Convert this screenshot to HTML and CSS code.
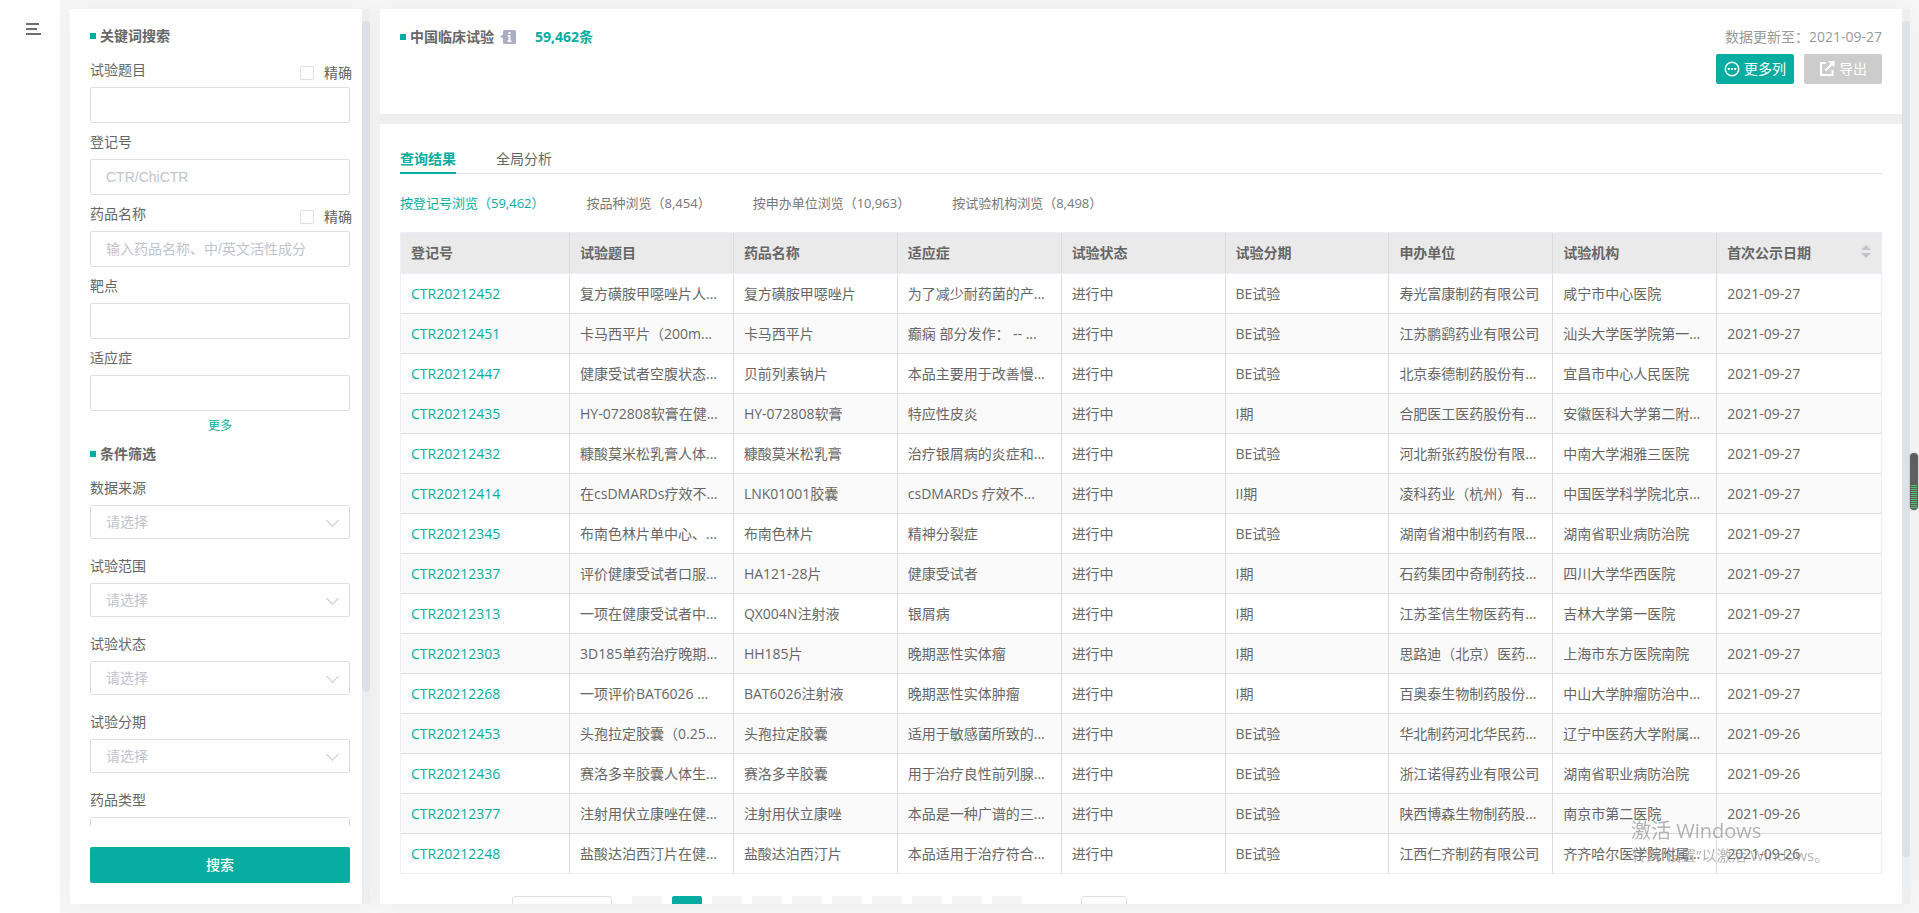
FILE: index.html
```html
<!DOCTYPE html>
<html lang="zh-CN">
<head>
<meta charset="utf-8">
<title>中国临床试验</title>
<link rel="stylesheet" href="styles.css">
</head>
<body>
<nav class="rail">
  <button class="menu-btn" type="button" aria-label="菜单">
    <svg width="16" height="14" viewBox="0 0 16 14" fill="none" stroke="#6e6e6e" stroke-width="2"><path d="M0 2h13M0 7h11M0 12h15"/></svg>
  </button>
</nav>
<aside class="panel side">
  <form class="side-main">
    <div class="side-scroll">
      <h2 class="title">关键词搜索</h2>
      <div class="field">
        <div class="field-head"><label for="f1">试验题目</label><label class="exact"><input type="checkbox" class="check">精确</label></div>
        <input class="text" id="f1" type="text">
      </div>
      <div class="field">
        <div class="field-head"><label for="f2">登记号</label></div>
        <input class="text" id="f2" type="text" placeholder="CTR/ChiCTR">
      </div>
      <div class="field">
        <div class="field-head"><label for="f3">药品名称</label><label class="exact"><input type="checkbox" class="check">精确</label></div>
        <input class="text" id="f3" type="text" placeholder="输入药品名称、中/英文活性成分">
      </div>
      <div class="field">
        <div class="field-head"><label for="f4">靶点</label></div>
        <input class="text" id="f4" type="text">
      </div>
      <div class="field">
        <div class="field-head"><label for="f5">适应症</label></div>
        <input class="text" id="f5" type="text">
      </div>
      <a class="more" href="#">更多</a>
      <h2 class="title">条件筛选</h2>
      <div class="field pick"><div class="field-head"><label for="s1">数据来源</label></div><div class="select-wrap"><select id="s1" class="select"><option>请选择</option></select></div></div>
      <div class="field pick"><div class="field-head"><label for="s2">试验范围</label></div><div class="select-wrap"><select id="s2" class="select"><option>请选择</option></select></div></div>
      <div class="field pick"><div class="field-head"><label for="s3">试验状态</label></div><div class="select-wrap"><select id="s3" class="select"><option>请选择</option></select></div></div>
      <div class="field pick"><div class="field-head"><label for="s4">试验分期</label></div><div class="select-wrap"><select id="s4" class="select"><option>请选择</option></select></div></div>
      <div class="field pick"><div class="field-head"><label for="s5">药品类型</label></div><div class="select-wrap"><select id="s5" class="select"><option>请选择</option></select></div></div>
    </div>
    <button class="search" type="button">搜索</button>
  </form>
  <div class="bar"><div class="track"><div class="thumb thumb-side"></div></div></div>
</aside>
<main class="panel content">
  <div class="content-main">
    <header class="summary">
      <div class="summary-left">
        <h1 class="title">中国临床试验</h1>
        <svg class="info" width="16" height="14" viewBox="0 0 16 14"><path d="M0 6.500L3 4.500V1.500Q3 0 4.500 0H14.500Q16 0 16 1.500V12.500Q16 14 14.500 14H4.500Q3 14 3 12.500V8.500Z" fill="#a9aec4"/><path d="M8.500 2h2v2h-2zM7.500 5h3v5.500h1V12h-4v-1.500h1v-4h-1z" fill="#fff"/></svg>
        <strong class="count">59,462条</strong>
      </div>
      <div class="summary-right">
        <span class="updated">数据更新至：2021-09-27</span>
        <div class="actions">
          <button class="btn" type="button"><svg width="16" height="16" viewBox="0 0 16 16"><circle cx="8" cy="8" r="6.700" fill="none" stroke="#fff" stroke-width="1.400"/><path d="M3.800 7.100h2v1.800h-2zM7 7.100h2v1.800H7zM10.200 7.100h2v1.800h-2z" fill="#fff"/></svg>更多列</button>
          <button class="btn btn-off" type="button"><svg width="16" height="16" viewBox="0 0 16 16" fill="none" stroke="#fff" stroke-width="2"><path d="M7 2H2v12h11.500V9M6.500 9.500L13 3"/><path d="M9 0h6.500v6.500z" fill="#fff" stroke="none"/></svg>导出</button>
        </div>
      </div>
    </header>
    <section class="results">
      <div class="tabs"><a class="tab tab-on" href="#">查询结果</a><a class="tab" href="#">全局分析</a></div>
      <div class="views"><a class="view view-on" href="#">按登记号浏览（59,462）</a><a class="view" href="#">按品种浏览（8,454）</a><a class="view" href="#">按申办单位浏览（10,963）</a><a class="view" href="#">按试验机构浏览（8,498）</a></div>
      <table class="table">
        <colgroup><col class="col-id"><col><col><col><col><col><col><col><col></colgroup>
        <thead><tr><th>登记号</th><th>试验题目</th><th>药品名称</th><th>适应症</th><th>试验状态</th><th>试验分期</th><th>申办单位</th><th>试验机构</th><th><div class="sort">首次公示日期<svg width="10" height="16" viewBox="0 0 10 16" fill="#c0c4cc"><path d="M5 0l5 5H0zM5 13l5-5H0z"/></svg></div></th></tr></thead>
        <tbody>
          <tr><td><a href="#">CTR20212452</a></td><td>复方磺胺甲噁唑片人...</td><td>复方磺胺甲噁唑片</td><td>为了减少耐药菌的产...</td><td>进行中</td><td>BE试验</td><td>寿光富康制药有限公司</td><td>咸宁市中心医院</td><td>2021-09-27</td></tr>
          <tr><td><a href="#">CTR20212451</a></td><td>卡马西平片（200m...</td><td>卡马西平片</td><td>癫痫 部分发作： -- ...</td><td>进行中</td><td>BE试验</td><td>江苏鹏鹞药业有限公司</td><td>汕头大学医学院第一...</td><td>2021-09-27</td></tr>
          <tr><td><a href="#">CTR20212447</a></td><td>健康受试者空腹状态...</td><td>贝前列素钠片</td><td>本品主要用于改善慢...</td><td>进行中</td><td>BE试验</td><td>北京泰德制药股份有...</td><td>宜昌市中心人民医院</td><td>2021-09-27</td></tr>
          <tr><td><a href="#">CTR20212435</a></td><td>HY-072808软膏在健...</td><td>HY-072808软膏</td><td>特应性皮炎</td><td>进行中</td><td>I期</td><td>合肥医工医药股份有...</td><td>安徽医科大学第二附...</td><td>2021-09-27</td></tr>
          <tr><td><a href="#">CTR20212432</a></td><td>糠酸莫米松乳膏人体...</td><td>糠酸莫米松乳膏</td><td>治疗银屑病的炎症和...</td><td>进行中</td><td>BE试验</td><td>河北新张药股份有限...</td><td>中南大学湘雅三医院</td><td>2021-09-27</td></tr>
          <tr><td><a href="#">CTR20212414</a></td><td>在csDMARDs疗效不...</td><td>LNK01001胶囊</td><td>csDMARDs 疗效不...</td><td>进行中</td><td>II期</td><td>凌科药业（杭州）有...</td><td>中国医学科学院北京...</td><td>2021-09-27</td></tr>
          <tr><td><a href="#">CTR20212345</a></td><td>布南色林片单中心、...</td><td>布南色林片</td><td>精神分裂症</td><td>进行中</td><td>BE试验</td><td>湖南省湘中制药有限...</td><td>湖南省职业病防治院</td><td>2021-09-27</td></tr>
          <tr><td><a href="#">CTR20212337</a></td><td>评价健康受试者口服...</td><td>HA121-28片</td><td>健康受试者</td><td>进行中</td><td>I期</td><td>石药集团中奇制药技...</td><td>四川大学华西医院</td><td>2021-09-27</td></tr>
          <tr><td><a href="#">CTR20212313</a></td><td>一项在健康受试者中...</td><td>QX004N注射液</td><td>银屑病</td><td>进行中</td><td>I期</td><td>江苏荃信生物医药有...</td><td>吉林大学第一医院</td><td>2021-09-27</td></tr>
          <tr><td><a href="#">CTR20212303</a></td><td>3D185单药治疗晚期...</td><td>HH185片</td><td>晚期恶性实体瘤</td><td>进行中</td><td>I期</td><td>思路迪（北京）医药...</td><td>上海市东方医院南院</td><td>2021-09-27</td></tr>
          <tr><td><a href="#">CTR20212268</a></td><td>一项评价BAT6026 ...</td><td>BAT6026注射液</td><td>晚期恶性实体肿瘤</td><td>进行中</td><td>I期</td><td>百奥泰生物制药股份...</td><td>中山大学肿瘤防治中...</td><td>2021-09-27</td></tr>
          <tr><td><a href="#">CTR20212453</a></td><td>头孢拉定胶囊（0.25...</td><td>头孢拉定胶囊</td><td>适用于敏感菌所致的...</td><td>进行中</td><td>BE试验</td><td>华北制药河北华民药...</td><td>辽宁中医药大学附属...</td><td>2021-09-26</td></tr>
          <tr><td><a href="#">CTR20212436</a></td><td>赛洛多辛胶囊人体生...</td><td>赛洛多辛胶囊</td><td>用于治疗良性前列腺...</td><td>进行中</td><td>BE试验</td><td>浙江诺得药业有限公司</td><td>湖南省职业病防治院</td><td>2021-09-26</td></tr>
          <tr><td><a href="#">CTR20212377</a></td><td>注射用伏立康唑在健...</td><td>注射用伏立康唑</td><td>本品是一种广谱的三...</td><td>进行中</td><td>BE试验</td><td>陕西博森生物制药股...</td><td>南京市第二医院</td><td>2021-09-26</td></tr>
          <tr><td><a href="#">CTR20212248</a></td><td>盐酸达泊西汀片在健...</td><td>盐酸达泊西汀片</td><td>本品适用于治疗符合...</td><td>进行中</td><td>BE试验</td><td>江西仁齐制药有限公司</td><td>齐齐哈尔医学院附属...</td><td>2021-09-26</td></tr>
        </tbody>
      </table>
      <div class="pager">
        <select class="page-size" aria-label="每页条数"></select>
        <div class="pages">
          <button class="page" type="button" aria-label="上一页"></button><button class="page page-on" type="button" aria-label="第1页"></button><button class="page" type="button" aria-label="第2页"></button><button class="page" type="button" aria-label="第3页"></button><button class="page" type="button" aria-label="第4页"></button><button class="page" type="button" aria-label="第5页"></button><button class="page" type="button" aria-label="第6页"></button><button class="page" type="button" aria-label="更多页"></button><button class="page" type="button" aria-label="末页"></button><button class="page" type="button" aria-label="下一页"></button>
        </div>
        <input class="page-jump" type="text" aria-label="跳至页">
      </div>
    </section>
  </div>
  <div class="bar"><div class="track"><div class="thumb thumb-main"></div></div></div>
</main>
<div class="gauge"><div class="gauge-fill"></div></div>
<div class="watermark"><div class="wm-title">激活 Windows</div><div class="wm-text">转到“设置”以激活 Windows。</div></div>
</body>
</html>
```
FILE: styles.css
```css
* { box-sizing: border-box; }
body {
  margin: 0;
  height: 100vh;
  display: flex;
  overflow: hidden;
  background: #f6f6f6;
  color: #666;
  font: 14px/20px "Open Sans", "Noto Sans CJK SC", sans-serif;
}
a { color: inherit; text-decoration: none; }
button, input, select { font: inherit; color: inherit; margin: 0; }
button { border: 0; padding: 0; cursor: pointer; }

.rail { flex: none; width: 60px; background: #fff; padding: 22px 0 0 26px; }
.menu-btn { display: block; background: none; }
.menu-btn svg { display: block; }

.panel { display: flex; margin: 9px 0; background: #fff; box-shadow: 0 0 20px rgba(0, 0, 0, 0.04); }
.side { flex: none; width: 300px; margin-left: 10px; }
.side-main { flex: 1; min-width: 0; display: flex; flex-direction: column; padding: 17px 10px 21px 20px; }
.side-scroll { flex: 1; min-height: 0; overflow: hidden; }

.title { display: flex; align-items: center; gap: 4px; margin: 0; font-size: 14px; line-height: 20px; font-weight: 700; }
.title::before { content: ""; width: 6px; height: 6px; background: #07ada0; }

.field-head { display: flex; justify-content: space-between; height: 36px; padding-top: 9px; }
.title + .field .field-head { height: 41px; padding-top: 14px; }
.exact { display: flex; align-items: center; gap: 10px; height: 26px; }
.check { appearance: none; width: 14px; height: 14px; border: 1px solid #dcdfe6; border-radius: 2px; background: #fff; }
.text, .select-wrap, .search, .more { display: block; width: calc(100% - 2px); }
.text { height: 36px; padding: 0 15px; border: 1px solid #dcdfe6; border-radius: 2px; background: #fff; outline: 0; font-family: "Liberation Sans", "Noto Sans CJK SC", sans-serif; }
.text::placeholder { color: #c0c4cc; opacity: 1; }
.more { margin: 5px 0 8px; text-align: center; font-size: 12px; color: #07ada0; }
.pick .field-head { height: 44px; padding-top: 17px; }
.title + .pick .field-head { height: 41px; }
.select-wrap { position: relative; }
.select-wrap::after {
  content: "";
  position: absolute;
  right: 13px;
  top: 11px;
  width: 8px;
  height: 8px;
  border: solid #c0c4cc;
  border-width: 0 1px 1px 0;
  transform: rotate(45deg);
}
.select { appearance: none; display: block; width: 100%; height: 34px; padding: 0 15px; border: 1px solid #dcdfe6; border-radius: 2px; background: #fff; color: #c0c4cc; }
.search { flex: none; height: 36px; margin-top: 21px; border-radius: 2px; background: #07ada0; color: #fff; font-weight: 500; }

.bar { flex: none; width: 8px; padding: 12px 0; background: #eee; }
.track { height: 100%; background: #ebeff3; }
.thumb { border-radius: 4px; background: #dde2ea; }
.thumb-side { height: 77%; }
.thumb-main { height: 96%; }

.content { flex: 1; min-width: 0; margin: 9px 9px 9px 10px; }
.content-main { flex: 1; min-width: 0; overflow: hidden; }
.summary { display: flex; justify-content: space-between; height: 115px; padding: 18px 20px 0; border-bottom: 10px solid #eee; }
.summary-left { display: flex; align-items: center; height: 20px; }
.info { margin-left: 6px; }
.count { margin-left: 19px; color: #07ada0; }
.summary-right { display: flex; flex-direction: column; align-items: flex-end; gap: 7px; color: #999; }
.actions { display: flex; gap: 10px; }
.btn { display: flex; align-items: center; justify-content: center; gap: 4px; width: 78px; height: 30px; border-radius: 2px; background: #07ada0; color: #fff; }
.btn-off { background: #ccc; }

.results { padding: 22px 20px 0; }
.tabs { display: flex; gap: 40px; border-bottom: 1px solid #e4e4e4; }
.tab { padding: 3px 0; margin-bottom: -1px; border-bottom: 2px solid transparent; }
.tab-on { border-color: #07ada0; color: #07ada0; font-weight: 700; }
.views { display: flex; gap: 42px; padding: 19px 0; font-size: 13px; color: #777; }
.view-on { color: #07ada0; }

.table { width: 100%; table-layout: fixed; border-collapse: separate; border-spacing: 0; border: solid #ebeef5; border-width: 1px 1px 0 1px; }
.col-id { width: 169px; }
.table th, .table td { height: 40px; padding: 0 10px; text-align: left; white-space: nowrap; overflow: hidden; border-right: 1px solid #dcdcdc; border-bottom: 1px solid #dcdcdc; }
.table th { height: 41px; background: #eaeaea; font-weight: 700; border-bottom-color: #ebeef5; }
.table th:last-child, .table td:last-child { border-right: 0; }
.table tbody tr:nth-child(even) { background: #fafafa; }
.table tbody tr:last-child td { border-bottom-color: #ebeef5; }
.table td a { color: #07ada0; }
.sort { display: flex; align-items: center; justify-content: space-between; }

.pager { display: flex; align-items: flex-start; padding: 22px 0 0 112px; }
.page-size { appearance: none; width: 100px; height: 28px; margin-right: 20px; border: 1px solid #dcdfe6; border-radius: 3px; background: #fff; }
.pages { display: flex; gap: 10px; margin-right: 59px; }
.page { width: 30px; height: 28px; border-radius: 2px; background: #f4f4f5; }
.page-on { background: #07ada0; }
.page-jump { width: 46px; height: 28px; border: 1px solid #dcdfe6; border-radius: 3px; }

.gauge { position: fixed; right: 1px; top: 453px; width: 8px; height: 57px; padding: 32px 1px 2px; border-radius: 4px; background: #5f5f5f; box-shadow: 0 0 2px rgba(0, 0, 0, 0.3); }
.gauge-fill { height: 100%; background: repeating-linear-gradient(#4fc46a 0 1px, #5f5f5f 1px 2px); }
.watermark { position: fixed; right: 90px; bottom: 47px; width: 198px; white-space: nowrap; color: rgba(130, 130, 130, 0.6); pointer-events: none; }
.wm-title { font-size: 20px; line-height: 26px; }
.wm-text { font-size: 15px; line-height: 22px; }
```
